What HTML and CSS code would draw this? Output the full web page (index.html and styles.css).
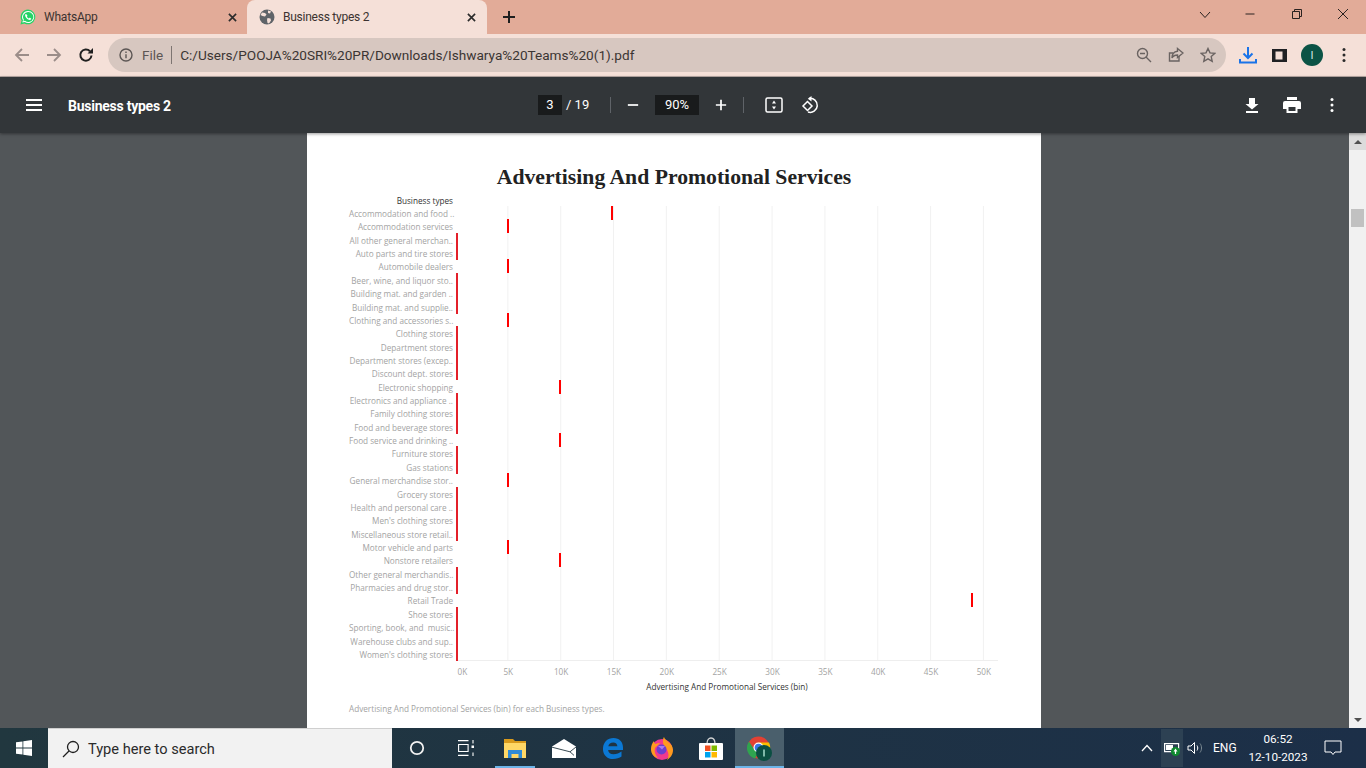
FILE: index.html
```html
<!DOCTYPE html>
<html lang="en">
<head>
<meta charset="utf-8">
<title>Business types 2</title>
<link rel="stylesheet" href="styles.css">
</head>
<body>
<div class="screen">
  <header class="tabstrip">
    <div class="tab">
      <svg class="favicon" viewBox="0 0 16 16"><path fill="#25d366" d="M8 .5a7.4 7.4 0 0 0-6.4 11.1L.5 15.5l4-1A7.4 7.4 0 1 0 8 .5z"/><path fill="#fff" d="M8 2a6 6 0 0 0-5 9.2l-.7 2.400 2.500-.6A6 6 0 1 0 8 2z"/><path fill="#25d366" d="M8 3a5 5 0 0 0-4.200 7.600l-.4 1.600 1.700-.4A5 5 0 1 0 8 3z"/><path fill="#fff" d="M6 5c-.3 0-.9.400-.9 1.300 0 1.800 2.500 4.700 4.700 4.700.9 0 1.400-.7 1.400-1.200 0-.3-1.200-1-1.500-1-.3 0-.5.600-.8.600-.6 0-2-1.300-2-1.900 0-.3.500-.5.500-.8S6.300 5 6 5z"/></svg>
      <span class="tab-title">WhatsApp</span>
      <svg class="tab-close" viewBox="0 0 10 10"><path d="M1 1l8 8M9 1l-8 8"/></svg>
    </div>
    <div class="tab tab-active">
      <svg class="favicon" viewBox="0 0 16 16"><circle cx="8" cy="8" r="7.500" fill="#5f6368"/><path fill="#f5e0d8" d="M3 3.500l3 .5 1.500 1.500L6 7.500 3.500 7 1.500 6zM8.500 9l3 .5.5 2-2 3-1.500-.5-.5-3zM9 1.500l3 .8-1 2.200-2-.5z"/></svg>
      <span class="tab-title">Business types 2</span>
      <svg class="tab-close" viewBox="0 0 10 10"><path d="M1 1l8 8M9 1l-8 8"/></svg>
    </div>
    <svg class="newtab" viewBox="0 0 14 14"><path d="M7 1v12M1 7h12"/></svg>
    <div class="window-controls">
      <svg class="win-icon win-chevron" viewBox="0 0 12 12"><path d="M1 4l5 5.500L11 4"/></svg>
      <svg class="win-icon" viewBox="0 0 12 12"><path d="M1.500 6h9"/></svg>
      <svg class="win-icon" viewBox="0 0 12 12"><path d="M1.500 3.500h7v7h-7zM3.500 3.500v-2h7v7h-2"/></svg>
      <svg class="win-icon win-close" viewBox="0 0 12 12"><path d="M1 1l10 10M11 1L1 11"/></svg>
    </div>
  </header>

  <nav class="toolbar">
    <svg class="nav-icon nav-dim" viewBox="0 0 16 16"><path d="M15 8H2M8 2L2 8l6 6"/></svg>
    <svg class="nav-icon nav-dim" viewBox="0 0 16 16"><path d="M1 8h13M8 2l6 6-6 6"/></svg>
    <svg class="nav-icon nav-reload" viewBox="0 0 16 16"><path d="M13.500 8.500A5.600 5.600 0 1 1 12 4.200"/><path class="solid" d="M9.500 6.500H15V1z"/></svg>
    <div class="omnibox">
      <svg class="omni-info" viewBox="0 0 14 14"><circle cx="7" cy="7" r="6"/><path d="M7 6.200v4M7 3.500v1.400"/></svg>
      <span class="omni-file">File</span>
      <span class="omni-sep"></span>
      <span class="omni-url">C:/Users/POOJA%20SRI%20PR/Downloads/Ishwarya%20Teams%20(1).pdf</span>
      <div class="omni-actions">
        <svg class="omni-icon" viewBox="0 0 16 16"><circle cx="6.500" cy="6.500" r="5"/><path d="M4 6.500h5M10 10l5 5"/></svg>
        <svg class="omni-icon" viewBox="0 0 16 16"><path d="M11 9v5H1.500V6H5"/><path d="M9.500 1.500L15 6l-5.500 4.500V8C7 8 5 9 4 11c0-4 2-6.500 5.500-6.800z"/></svg>
        <svg class="omni-icon" viewBox="0 0 16 16"><path d="M8 1.500l2 4.400 4.700.5-3.500 3.200 1 4.700L8 11.900l-4.200 2.400 1-4.700L1.300 6.400 6 5.900z"/></svg>
      </div>
    </div>
    <svg class="tool-icon tool-download" viewBox="0 0 18 18"><path d="M9 1v11M4.500 7.500L9 12l4.500-4.500M1 13v3.500h16V13"/></svg>
    <svg class="tool-icon tool-panel" viewBox="0 0 15 13"><path d="M0 0h15v13H0z" fill="#202124"/><path d="M3.500 2.500h7v8h-7z" fill="#f5e0d8"/></svg>
    <div class="avatar">I</div>
    <svg class="tool-icon tool-dots" viewBox="0 0 4 16"><circle cx="2" cy="2.500" r="1.500"/><circle cx="2" cy="8" r="1.500"/><circle cx="2" cy="13.500" r="1.500"/></svg>
  </nav>

  <div class="pdfbar">
    <div class="pdf-left">
      <svg class="pdf-menu" viewBox="0 0 16 12"><path d="M0 1h16M0 6h16M0 11h16"/></svg>
      <span class="pdf-title">Business types 2</span>
    </div>
    <div class="pdf-center">
      <span class="pdf-field pdf-page">3</span>
      <span class="pdf-total">/ 19</span>
      <span class="pdf-sep sep-a"></span>
      <svg class="pdf-icon pdf-minus" viewBox="0 0 14 14"><path d="M1 7h12"/></svg>
      <span class="pdf-field pdf-zoom">90%</span>
      <svg class="pdf-icon pdf-plus" viewBox="0 0 14 14"><path d="M1 7h12M7 1v12"/></svg>
      <span class="pdf-sep sep-b"></span>
      <svg class="pdf-wide pdf-fit" viewBox="0 0 18 16"><rect x="1" y="1" width="16" height="14" rx="1.500"/><path class="solid" d="M9 3.500L11 6.500H7zM9 12.500L7 9.500h4z"/></svg>
      <svg class="pdf-wide pdf-rotate" viewBox="0 0 18 18"><path d="M8 2.500a7 7 0 1 1-1 13.500"/><path class="solid" d="M10.500 0v5.500L6.800 2.700z"/><path d="M6.500 5.500L2 10l4.500 4.500L11 10z"/></svg>
    </div>
    <div class="pdf-right">
      <svg class="pdf-action pdf-save" viewBox="0 0 16 16"><path class="solid" d="M5 1h6v6h3.500L8 12.500 1.500 7H5zM2 14h12v2H2z"/></svg>
      <svg class="pdf-action pdf-print" viewBox="0 0 18 16"><path class="solid" d="M4 0h10v3H4zM2 4h14a2 2 0 0 1 2 2v6h-3.500v4h-11v-4H0V6a2 2 0 0 1 2-2z"/><path fill="#323639" d="M5.500 10h7v4h-7z"/></svg>
      <svg class="pdf-action pdf-dots" viewBox="0 0 4 16"><circle class="solid" cx="2" cy="2.500" r="1.500"/><circle class="solid" cx="2" cy="8" r="1.500"/><circle class="solid" cx="2" cy="13.500" r="1.500"/></svg>
    </div>
  </div>

  <main class="viewer">
    <div class="viewport">
      <article class="page">
        <h1 class="chart-title">Advertising And Promotional Services</h1>
        <div class="field-head">Business types</div>
        <div class="chart">
          <div class="labels">
            <div>Accommodation and food ..</div>
            <div>Accommodation services</div>
            <div>All other general merchan..</div>
            <div>Auto parts and tire stores</div>
            <div>Automobile dealers</div>
            <div>Beer, wine, and liquor sto..</div>
            <div>Building mat. and garden ..</div>
            <div>Building mat. and supplie..</div>
            <div>Clothing and accessories s..</div>
            <div>Clothing stores</div>
            <div>Department stores</div>
            <div>Department stores (excep..</div>
            <div>Discount dept. stores</div>
            <div>Electronic shopping</div>
            <div>Electronics and appliance ..</div>
            <div>Family clothing stores</div>
            <div>Food and beverage stores</div>
            <div>Food service and drinking ..</div>
            <div>Furniture stores</div>
            <div>Gas stations</div>
            <div>General merchandise stor..</div>
            <div>Grocery stores</div>
            <div>Health and personal care ..</div>
            <div>Men's clothing stores</div>
            <div>Miscellaneous store retail..</div>
            <div>Motor vehicle and parts</div>
            <div>Nonstore retailers</div>
            <div>Other general merchandis..</div>
            <div>Pharmacies and drug stor..</div>
            <div>Retail Trade</div>
            <div>Shoe stores</div>
            <div>Sporting, book, and  music..</div>
            <div>Warehouse clubs and sup..</div>
            <div>Women's clothing stores</div>
          </div>
          <div class="plot">
            <div class="row"><span class="bar" style="margin-left:155px"></span></div>
            <div class="row"><span class="bar" style="margin-left:51px"></span></div>
            <div class="row"><span class="bar zero"></span></div>
            <div class="row"><span class="bar zero"></span></div>
            <div class="row"><span class="bar" style="margin-left:51px"></span></div>
            <div class="row"><span class="bar zero"></span></div>
            <div class="row"><span class="bar zero"></span></div>
            <div class="row"><span class="bar zero"></span></div>
            <div class="row"><span class="bar" style="margin-left:51px"></span></div>
            <div class="row"><span class="bar zero"></span></div>
            <div class="row"><span class="bar zero"></span></div>
            <div class="row"><span class="bar zero"></span></div>
            <div class="row"><span class="bar zero"></span></div>
            <div class="row"><span class="bar" style="margin-left:103px"></span></div>
            <div class="row"><span class="bar zero"></span></div>
            <div class="row"><span class="bar zero"></span></div>
            <div class="row"><span class="bar zero"></span></div>
            <div class="row"><span class="bar" style="margin-left:103px"></span></div>
            <div class="row"><span class="bar zero"></span></div>
            <div class="row"><span class="bar zero"></span></div>
            <div class="row"><span class="bar" style="margin-left:51px"></span></div>
            <div class="row"><span class="bar zero"></span></div>
            <div class="row"><span class="bar zero"></span></div>
            <div class="row"><span class="bar zero"></span></div>
            <div class="row"><span class="bar zero"></span></div>
            <div class="row"><span class="bar" style="margin-left:51px"></span></div>
            <div class="row"><span class="bar" style="margin-left:103px"></span></div>
            <div class="row"><span class="bar zero"></span></div>
            <div class="row"><span class="bar zero"></span></div>
            <div class="row"><span class="bar" style="margin-left:515px"></span></div>
            <div class="row"><span class="bar zero"></span></div>
            <div class="row"><span class="bar zero"></span></div>
            <div class="row"><span class="bar zero"></span></div>
            <div class="row"><span class="bar zero"></span></div>
          </div>
        </div>
        <div class="ticks">
          <span>0K</span><span>5K</span><span>10K</span><span>15K</span><span>20K</span><span>25K</span><span>30K</span><span>35K</span><span>40K</span><span>45K</span><span>50K</span>
        </div>
        <div class="axis-title">Advertising And Promotional Services (bin)</div>
        <p class="caption">Advertising And Promotional Services (bin) for each Business types.</p>
      </article>
    </div>
    <aside class="scrollbar">
      <div class="scroll-btn"><span class="arrow-up"></span></div>
      <div class="scroll-thumb"></div>
      <div class="scroll-btn scroll-btn-down"><span class="arrow-down"></span></div>
    </aside>
  </main>

  <footer class="taskbar">
    <svg class="start" viewBox="0 0 16 16"><path d="M0 2.300l6.500-.9v6.200H0zM7.300 1.300L16 0v7.600H7.300zM0 8.400h6.500v6.200L0 13.700zM7.300 8.400H16V16l-8.700-1.300z"/></svg>
    <div class="search">
      <svg class="search-icon" viewBox="0 0 18 18"><circle cx="11" cy="7" r="5.500"/><path d="M7 11l-6 6"/></svg>
      <span>Type here to search</span>
    </div>
    <div class="task-item"><svg class="task-svg" viewBox="0 0 18 18"><circle cx="9" cy="9" r="7" fill="none" stroke="#f2f2f2" stroke-width="2"/></svg></div>
    <div class="task-item"><svg class="task-svg" viewBox="0 0 16 16"><path fill="none" stroke="#fff" stroke-width="1.100" d="M0 .6h10.500M0 15.400h10.500M.6 4.500h9.500v7H.6zM15 0v3.500M15 12.500V16"/><path fill="#fff" d="M13.500 5.500h2.500v2.500h-2.500z"/></svg></div>
    <div class="task-item task-folder"><svg class="folder-svg" viewBox="0 0 22 19"><path fill="#d99a1c" d="M0 0h9l2 2h11v16H0z"/><path fill="#ffd766" d="M0 4h22v15H0z"/><path fill="#2f8ad6" d="M4 11h14v8h-3.500v-4h-7v4H4z"/></svg></div>
    <div class="task-item"><svg class="mail-svg" viewBox="0 0 24 19"><path fill="#fff" d="M0 7.500L12 0l12 7.500V19H0z"/><path fill="none" stroke="#21363f" stroke-width=".9" d="M0 8.200L18 12.800 24 8M18 12.800l4 3.600"/></svg></div>
    <div class="task-item"><svg class="edge-svg" viewBox="0 0 20 21"><path fill="#0b78d4" d="M10.500 0C4.500 0 .5 4 0 10c-.5 6.500 4 11 10 11 3.500 0 6.500-1 8.500-2.500v-5c-2 1.500-5 2.800-8 2.800-3 0-5.200-1.600-5.400-4.300H20V9.500C20 4 16.500 0 10.500 0zM5.300 8.200C5.800 6 7.500 4.500 10.300 4.500c2.500 0 3.900 1.500 4.100 3.700z"/></svg></div>
    <div class="task-item"><svg class="fox-svg" viewBox="0 0 22 23"><circle cx="11" cy="12.500" r="10.500" fill="#f0388f"/><path fill="#ff9a1f" d="M13 0c1 4 9 6 9 13 0 5-3 8-6 10 2-3 2-7 0-10-1-3-4-4-4-8 0-2 0-4 1-5zM0 12c0-3 1-6 3-8 0 2 1 3 2 3 1-1 3-1 4-1-1 2-4 3-5 5-1 3 0 7 3 10-4-1-7-4-7-9z"/><circle cx="10.500" cy="12.500" r="5" fill="#6c3ecf"/><path fill="#a679f0" d="M7 9h7l-3 3.500z"/></svg></div>
    <div class="task-item"><svg class="store-svg" viewBox="0 0 24 23"><path fill="none" stroke="#d8d8d8" stroke-width="1.300" d="M8 7c0-8 8-8 8 0"/><path fill="#fff" d="M1 6h22a1 1 0 0 1 1 1v15a1 1 0 0 1-1 1H1a1 1 0 0 1-1-1V7a1 1 0 0 1 1-1z"/><path fill="#f25022" d="M6 8.500h5.500V14H6z"/><path fill="#7fba00" d="M12.500 8.500H18V14h-5.500z"/><path fill="#00a4ef" d="M6 15h5.500v5.500H6z"/><path fill="#ffb900" d="M12.500 15H18v5.500h-5.500z"/></svg></div>
    <div class="task-item task-active"><svg class="task-big" viewBox="0 0 25 25"><circle cx="11.500" cy="11.500" r="11" fill="#e34133"/><path fill="#f8bd00" d="M11.500 6.500H22a11 11 0 0 1-5.500 15L11.500 16.500z"/><path fill="#2fa44f" d="M2 5.500L7.500 14l4 2.500-3.500 6A11 11 0 0 1 2 5.500z"/><circle cx="11.500" cy="11.500" r="5" fill="#fff"/><circle cx="11.500" cy="11.500" r="3.800" fill="#3b78e7"/><circle cx="17" cy="17" r="8" fill="#0b4f42"/><path stroke="#cfe" stroke-width="1.200" d="M17 13.500v7"/></svg></div>
    <div class="tray">
      <svg class="tray-chevron" viewBox="0 0 12 8"><path d="M1 7l5-5.500L11 7"/></svg>
      <div class="tray-battery"><svg viewBox="0 0 16 15"><path fill="none" stroke="#fff" stroke-width="1.200" d="M.6 2.600h14v8H.6z"/><path fill="#fff" d="M2 4h7v5H2z"/><circle cx="11.500" cy="10.500" r="4.500" fill="#0f8a2f"/><path fill="#fff" d="M11.500 7.500l2 3h-1.400v2.500h-1.200v-2.500H9.500z"/></svg></div>
      <svg class="tray-volume" viewBox="0 0 16 14"><path d="M1 5h3l3.500-3.500v11L4 9H1zM10 4.500c1 1.500 1 3.500 0 5"/><path class="vol-dim" d="M13 2.500c2 2.500 2 6.500 0 9"/></svg>
      <span class="tray-lang">ENG</span>
      <div class="tray-clock"><span>06:52</span><span>12-10-2023</span></div>
      <svg class="tray-notify" viewBox="0 0 18 16"><path d="M1 1h16v11h-6l-2 2.500L7 12H1z"/></svg>
    </div>
  </footer>
</div>
</body>
</html>
```
FILE: styles.css
```css
* { box-sizing: border-box; }
html, body { margin: 0; height: 100%; }
body { overflow: hidden; font-family: "Roboto", "Liberation Sans", sans-serif; }
svg { display: block; flex: none; }
.solid { fill: #fff; stroke: none; }

.screen { width: 1366px; height: 768px; display: flex; flex-direction: column; overflow: hidden; }

/* Tab strip */
.tabstrip { height: 34px; background: #e2ab98; display: flex; align-items: stretch; flex: none; }
.tab { display: flex; align-items: center; width: 247px; padding: 0 10px 0 20px; font-size: 12px; color: #3c3330; }
.tab-active { width: 240px; padding-left: 12px; background: #f5e0d8; border-radius: 8px 8px 0 0; }
.favicon { width: 16px; height: 16px; margin-right: 8px; }
.tab-title { flex: 1; white-space: nowrap; letter-spacing: -.2px; }
.tab-active .tab-title { letter-spacing: -.25px; }
.tab-close { width: 9px; height: 9px; fill: none; stroke: #2b2b2b; stroke-width: 1.800; }
.tab-active .tab-close { margin-right: 1px; }
.newtab { width: 14px; height: 14px; align-self: center; margin: 0 0 0 15px; fill: none; stroke: #1f1f1f; stroke-width: 2; }
.window-controls { margin-left: auto; display: flex; align-items: center; padding-right: 17px; height: 28px; gap: 35px; }
.win-icon { width: 12px; height: 12px; fill: none; stroke: #2a2220; stroke-width: 1; }
.win-chevron { margin-right: -2px; }
.win-close { margin-left: -1px; }

/* Address toolbar */
.toolbar { height: 43px; background: #f5e0d8; border-bottom: 1px solid #b9aaa5; padding: 4px 0 4px 14px; display: flex; align-items: center; flex: none; }
.nav-icon { width: 16px; height: 16px; fill: none; stroke-width: 1.800; }
.nav-dim { stroke: #9b8d89; margin-right: 16px; }
.nav-reload { stroke: #1f1f1f; stroke-width: 2; margin-right: 14px; }
.nav-reload .solid { fill: #1f1f1f; }
.omnibox { width: 1118px; height: 34px; border-radius: 17px; background: #d7c7c0; display: flex; align-items: center; padding-left: 11px; font-size: 14px; color: #3b3533; }
.omni-info { width: 14px; height: 14px; fill: none; stroke: #5c5654; stroke-width: 1.400; margin-right: 9px; }
.omni-file { color: #5c5654; font-size: 13.500px; }
.omni-sep { width: 1px; height: 18px; background: #7e7572; margin: 0 8px 0 8px; }
.omni-url { white-space: nowrap; font-size: 13.600px; }
.omni-actions { margin-left: auto; display: flex; gap: 16px; padding-right: 10px; }
.omni-icon { width: 16px; height: 16px; fill: none; stroke: #6a6361; stroke-width: 1.400; }
.tool-download { width: 18px; height: 18px; margin-left: 13px; fill: none; stroke: #1a73e8; stroke-width: 2; }
.tool-panel { width: 15px; height: 13px; margin-left: 15px; }
.avatar { width: 22px; height: 22px; margin-left: 14px; border-radius: 50%; background: #0b5345; color: #d8ece6; font-size: 11px; display: flex; align-items: center; justify-content: center; }
.tool-dots { width: 4px; height: 16px; margin-left: 19px; fill: #2a2a2a; }

/* PDF toolbar */
.pdfbar { height: 56px; background: #323639; color: #fff; display: flex; align-items: center; flex: none; position: relative; z-index: 2; box-shadow: 0 1px 3px rgba(0, 0, 0, .4); }
.pdf-left { width: 538px; display: flex; align-items: center; padding-left: 26px; flex: none; }
.pdf-menu { width: 16px; height: 12px; fill: none; stroke: #fff; stroke-width: 2; margin-right: 26px; }
.pdf-title { font-size: 14px; font-weight: 700; white-space: nowrap; letter-spacing: -.25px; margin-top: 1px; }
.pdf-center { display: flex; align-items: center; font-size: 13px; margin-top: -1px; }
.pdf-field { background: #191b1c; height: 20px; display: flex; align-items: center; justify-content: center; }
.pdf-page { width: 24px; }
.pdf-zoom { width: 44px; }
.pdf-total { margin-left: 4px; width: 24px; white-space: nowrap; }
.pdf-sep { width: 1px; height: 16px; background: #5f6368; }
.sep-a { margin: 0 16px 0 20px; }
.sep-b { margin: 0 21px 0 16px; }
.pdf-icon { width: 12px; height: 12px; fill: none; stroke: #fff; stroke-width: 2; }
.pdf-minus { margin-right: 16px; }
.pdf-plus { margin-left: 16px; }
.pdf-wide { fill: none; stroke: #fff; stroke-width: 1.500; }
.pdf-fit { width: 18px; height: 16px; margin-right: 18px; }
.pdf-rotate { width: 18px; height: 18px; }
.pdf-right { margin-left: auto; display: flex; align-items: center; padding-right: 32px; }
.pdf-action { width: 16px; height: 16px; }
.pdf-save { margin-right: 23px; }
.pdf-print { width: 18px; margin-right: 29px; }
.pdf-dots { width: 4px; }

/* Viewer */
.viewer { flex: 1; min-height: 0; display: flex; background: #525659; }
.viewport { flex: 1; display: flex; justify-content: center; overflow: hidden; }
.page { width: 734px; height: 100%; margin-right: 1px; background: #fff; padding: 31px 42px 0; color: #a3a3a3; font-family: "Open Sans", "Lato", sans-serif; }
.chart-title { margin: 0; font: 700 21.700px/26px "Liberation Serif", serif; color: #222; text-align: center; }
.field-head { width: 104px; height: 14px; margin-top: 4px; font-size: 8.200px; line-height: 14px; color: #333; text-align: right; }
.chart { display: flex; margin-top: -2px; }
.labels { width: 104px; margin: 1px 0 -1px; font-size: 8.200px; text-align: right; flex: none; }
.labels > div { height: 13.360px; line-height: 13.360px; white-space: pre; }
.plot { width: 542px; margin-left: 3px; border-bottom: 1px solid #eee; background-image: linear-gradient(to right, transparent 51.850px, #f1f1f1 51.850px, #f1f1f1 52.850px); background-size: 52.850px 100%; background-position: -.500px 0; background-repeat: repeat-x; }
.row { height: 13.360px; }
.bar { display: block; width: 2px; height: 14px; background: #f00; }
.zero { background: #e3202a; }
.ticks { display: flex; height: 22px; margin-left: 80px; font-size: 8.200px; line-height: 22px; }
.ticks span { width: 52.850px; text-align: center; flex: none; }
.ticks span:first-child { transform: translateX(7px); }
.axis-title { width: 560px; text-align: center; margin: -1px 0 0 98px; font-size: 8.200px; line-height: 10px; color: #333; }
.caption { margin: 11px 0 0; font-size: 8.200px; line-height: 12px; }

/* Scrollbar */
.scrollbar { width: 17px; background: #f1f1f1; display: flex; flex-direction: column; align-items: center; flex: none; }
.scroll-btn { width: 17px; height: 17px; background: #dcdcdc; display: flex; align-items: center; justify-content: center; }
.scroll-btn-down { margin-top: auto; background: #f1f1f1; }
.arrow-up { width: 0; height: 0; border: 4px solid transparent; border-top: 0; border-bottom: 4px solid #505050; }
.arrow-down { width: 0; height: 0; border: 4px solid transparent; border-bottom: 0; border-top: 4px solid #505050; }
.scroll-thumb { width: 13px; height: 18px; background: #c1c1c1; margin-top: 59px; }

/* Taskbar */
.taskbar { height: 40px; flex: none; display: flex; align-items: center; color: #fff; background: linear-gradient(to right, #21373f, #1c2f48); }
.start { width: 16px; height: 16px; margin: 0 16px; fill: #fff; }
.search { width: 344px; height: 40px; background: #f2f2f2; color: #2b2b2b; display: flex; align-items: center; padding: 1px 0 0 14px; font-size: 14.600px; border-top: 1px solid #cfcfcf; }
.search-icon { width: 18px; height: 18px; margin-right: 8px; fill: none; stroke: #1f1f1f; stroke-width: 1.300; }
.task-item { width: 49px; height: 40px; display: flex; align-items: center; justify-content: center; flex: none; }
.task-svg { width: 16px; height: 16px; }
.task-big { width: 25px; height: 25px; margin-top: 1px; }
.folder-svg { width: 22px; height: 19px; }
.mail-svg { width: 24px; height: 19px; }
.edge-svg { width: 20px; height: 21px; }
.fox-svg { width: 22px; height: 23px; }
.store-svg { width: 24px; height: 23px; }
.task-folder { background: linear-gradient(#6cb4e8, #6cb4e8) center bottom / 40px 2px no-repeat; }
.task-active { background: #4a5f6c; box-shadow: inset 0 -2px 0 #6cb4e8; }
.tray { margin-left: auto; display: flex; align-items: center; height: 40px; }
.tray-chevron { width: 12px; height: 8px; fill: none; stroke: #fff; stroke-width: 1.300; margin-right: 8px; }
.tray-battery { width: 22px; height: 38px; background: #2d4153; display: flex; align-items: center; justify-content: center; }
.tray-battery svg { width: 16px; height: 15px; }
.tray-volume { width: 16px; height: 14px; margin-left: 4px; fill: none; stroke: #fff; stroke-width: 1; }
.vol-dim { stroke: #7d8b93; }
.tray-lang { font-size: 12px; margin-left: 10px; width: 26px; }
.tray-clock { width: 78px; display: flex; flex-direction: column; align-items: center; font-size: 11.700px; line-height: 18px; }
.tray-notify { width: 18px; height: 16px; margin: 0 24px 0 7px; fill: none; stroke: #fff; stroke-width: 1; }
```
